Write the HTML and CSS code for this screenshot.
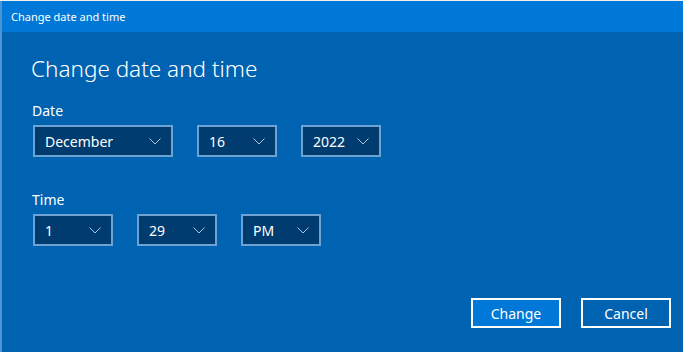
FILE: index.html
```html
<!DOCTYPE html>
<html lang="en">
<head>
    <meta charset="UTF-8">
    <title>Change date and time</title>
    <link rel="stylesheet" href="styles.css">
</head>
<body>
    <div class="window">
        <div class="titlebar">Change date and time</div>
        <div class="content">
            <h1>Change date and time</h1>

            <div class="field">
                <label>Date</label>
                <div class="row">
                    <div class="dropdown month">December <svg viewBox="0 0 12 7"><path d="M0.5 0.5 L6 6 L11.5 0.5"/></svg></div>
                    <div class="dropdown">16 <svg viewBox="0 0 12 7"><path d="M0.5 0.5 L6 6 L11.5 0.5"/></svg></div>
                    <div class="dropdown">2022 <svg viewBox="0 0 12 7"><path d="M0.5 0.5 L6 6 L11.5 0.5"/></svg></div>
                </div>
            </div>

            <div class="field time">
                <label>Time</label>
                <div class="row">
                    <div class="dropdown">1 <svg viewBox="0 0 12 7"><path d="M0.5 0.5 L6 6 L11.5 0.5"/></svg></div>
                    <div class="dropdown">29 <svg viewBox="0 0 12 7"><path d="M0.5 0.5 L6 6 L11.5 0.5"/></svg></div>
                    <div class="dropdown">PM <svg viewBox="0 0 12 7"><path d="M0.5 0.5 L6 6 L11.5 0.5"/></svg></div>
                </div>
            </div>

            <div class="buttons">
                <button class="primary">Change</button>
                <button>Cancel</button>
            </div>
        </div>
    </div>
</body>
</html>
```

FILE: styles.css
```css
body {
    margin: 0;
    background-color: #f0f0f0;
    font-family: "Noto Sans", "Open Sans", sans-serif;
    color: white;
    height: 352px;
    overflow: hidden;
}
.window {
    margin-top: 1px;
    height: 351px;
    background-color: #0063b1;
    border-left: 2px solid #4d94d4;
    box-sizing: border-box;
    display: flex;
    flex-direction: column;
}
.titlebar {
    background-color: #0078d7;
    height: 31px;
    line-height: 31px;
    font-size: 11px;
    padding-left: 9px;
}
.content {
    flex: 1;
    padding: 0 12px 0 29px;
    display: flex;
    flex-direction: column;
}
h1 {
    font-weight: 300;
    font-size: 22.5px;
    margin: 22px 0 0;
    line-height: 30px;
}
.field label {
    display: block;
    font-size: 14px;
    margin: 17px 0 0 1px;
    line-height: 20px;
}
.field.time label {
    margin-top: 33px;
}
.row {
    display: flex;
    gap: 24px;
    margin-top: 4px;
    padding-left: 2px;
}
.dropdown {
    width: 80px;
    height: 32px;
    box-sizing: border-box;
    border: 2px solid #6ea2d3;
    background-color: #003c6f;
    font-size: 14px;
    padding: 0 10px;
    display: flex;
    align-items: center;
    justify-content: space-between;
}
.dropdown.month {
    width: 140px;
}
.dropdown svg {
    width: 12px;
    height: 7px;
    fill: none;
    stroke: #a8c4de;
    stroke-width: 1;
}
.buttons {
    margin-top: auto;
    margin-bottom: 24px;
    display: flex;
    justify-content: flex-end;
    gap: 20px;
}
button {
    width: 90px;
    height: 30px;
    border: 2px solid white;
    background-color: transparent;
    color: white;
    font-family: inherit;
    font-size: 14px;
}
button.primary {
    background-color: #0078d7;
}
```
